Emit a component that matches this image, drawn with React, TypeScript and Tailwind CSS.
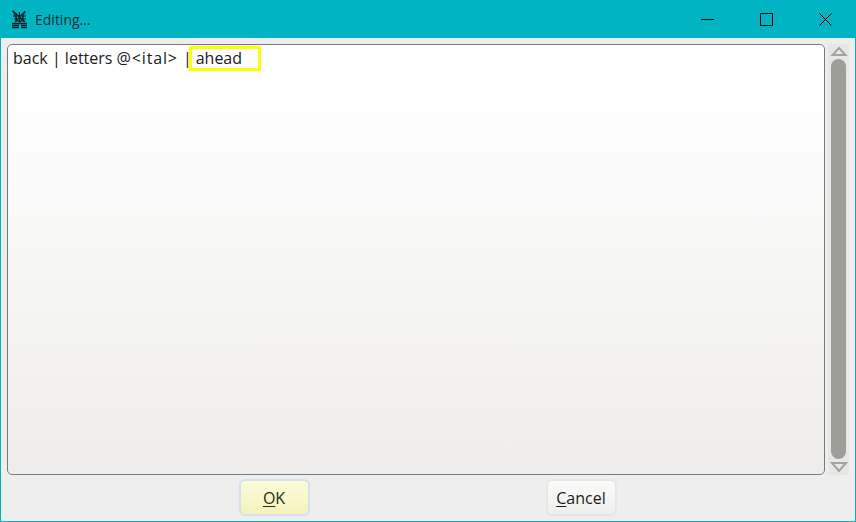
const font = "[font-family:'Open_Sans','Liberation_Sans',sans-serif]";

function AppIcon() {
  return (
    <svg width="17" height="19" viewBox="0 0 17 19" className="shrink-0" fill="none" stroke="#0c2226" strokeWidth="1.100">
      <path d="M1 1c3 0 4 11 7.500 11S12 1 15 2" />
      <path d="M2 1l12 11M14 1L4 12" />
      <path d="M5 3v9M8.500 2v10M12 3v9M2 6h13M3 9h12" />
      <path d="M1 13.500h15M1 15.500h7M10 15.500h6M1 17.500h7M10 17.500h6" strokeWidth="1.300" />
    </svg>
  );
}

function WindowButton({ children }: { children: React.ReactNode }) {
  return <div className="flex h-[38px] w-[59px] items-center justify-center">{children}</div>;
}

function ScrollBar() {
  return (
    <div className="flex w-[21px] flex-col items-center bg-[#e7e7e6]">
      <svg width="18" height="15" viewBox="0 0 18 15" fill="none" className="shrink-0">
        <path d="M2.500 11h13L9 4z" stroke="#a3a39f" strokeWidth="2" fill="#e7e7e6" />
      </svg>
      <div className="w-[15px] flex-1 rounded-[8px] bg-[#9e9e99]" />
      <svg width="18" height="16" viewBox="0 0 18 16" fill="none" className="shrink-0">
        <path d="M2 4h14L9 12z" stroke="#a3a39f" strokeWidth="2" fill="#e7e7e6" />
      </svg>
    </div>
  );
}

function ActionButton({ hot, mark, rest }: { hot?: boolean; mark: string; rest: string }) {
  return (
    <button
      className={`flex h-[37px] w-[71px] items-center justify-center rounded-[6px] border-2 pr-[1px] text-[16px] ${
        hot
          ? "border-[#d3e1f2] bg-gradient-to-b from-[#fbfbd9] to-[#f4f3bd] text-[#2b2b1c]"
          : "border-[#e6e6e4] bg-gradient-to-b from-[#fbfbfa] to-[#efefed] text-[#1c1c1c]"
      }`}
    >
      <span className="underline underline-offset-2">{mark}</span>
      {rest}
    </button>
  );
}

export default function App() {
  return (
    <div className={`flex h-[522px] w-[856px] flex-col bg-[#00b4c3] ${font}`}>
      <div className="flex h-[38px] shrink-0 items-center pl-[11px]">
        <AppIcon />
        <span className="ml-[7px] text-[14px] text-[#123136]">Editing...</span>
        <div className="ml-auto flex pr-[1px]">
          <WindowButton>
            <div className="h-px w-[13px] bg-black" />
          </WindowButton>
          <WindowButton>
            <div className="h-[13px] w-[13px] border border-black" />
          </WindowButton>
          <WindowButton>
            <svg width="13" height="13" viewBox="0 0 13 13" stroke="#000" strokeWidth="1" fill="none">
              <path d="M.5.5l12 12M12.500.5l-12 12" />
            </svg>
          </WindowButton>
        </div>
      </div>
      <div className="mx-px mb-px flex flex-1 flex-col bg-[#eeeeee] pl-[6px] pr-[6px] pt-[6px]">
        <div className="flex h-[431px] gap-[3px]">
          <div className="w-[818px] rounded-[5px] border border-[#7a7a78] bg-gradient-to-b from-white from-[8%] to-[#eeedeb] px-[5px] pt-px">
            <div className="flex items-center text-[16px] text-[#202020]">
              <span className="mt-[-2px] whitespace-pre">
                back | letters <span className="tracking-[0.85px]">@&lt;ital&gt; </span>|
              </span>
              <span className="ml-[-3px] h-[25px] w-[72px] border-[3px] border-[#ffff00] bg-white pl-[4px] leading-[18px]">
                ahead
              </span>
            </div>
          </div>
          <ScrollBar />
        </div>
        <div className="flex pt-[4px]">
          <div className="ml-[232px]">
            <ActionButton hot mark="O" rest="K" />
          </div>
          <div className="ml-[236px]">
            <ActionButton mark="C" rest="ancel" />
          </div>
        </div>
      </div>
    </div>
  );
}
